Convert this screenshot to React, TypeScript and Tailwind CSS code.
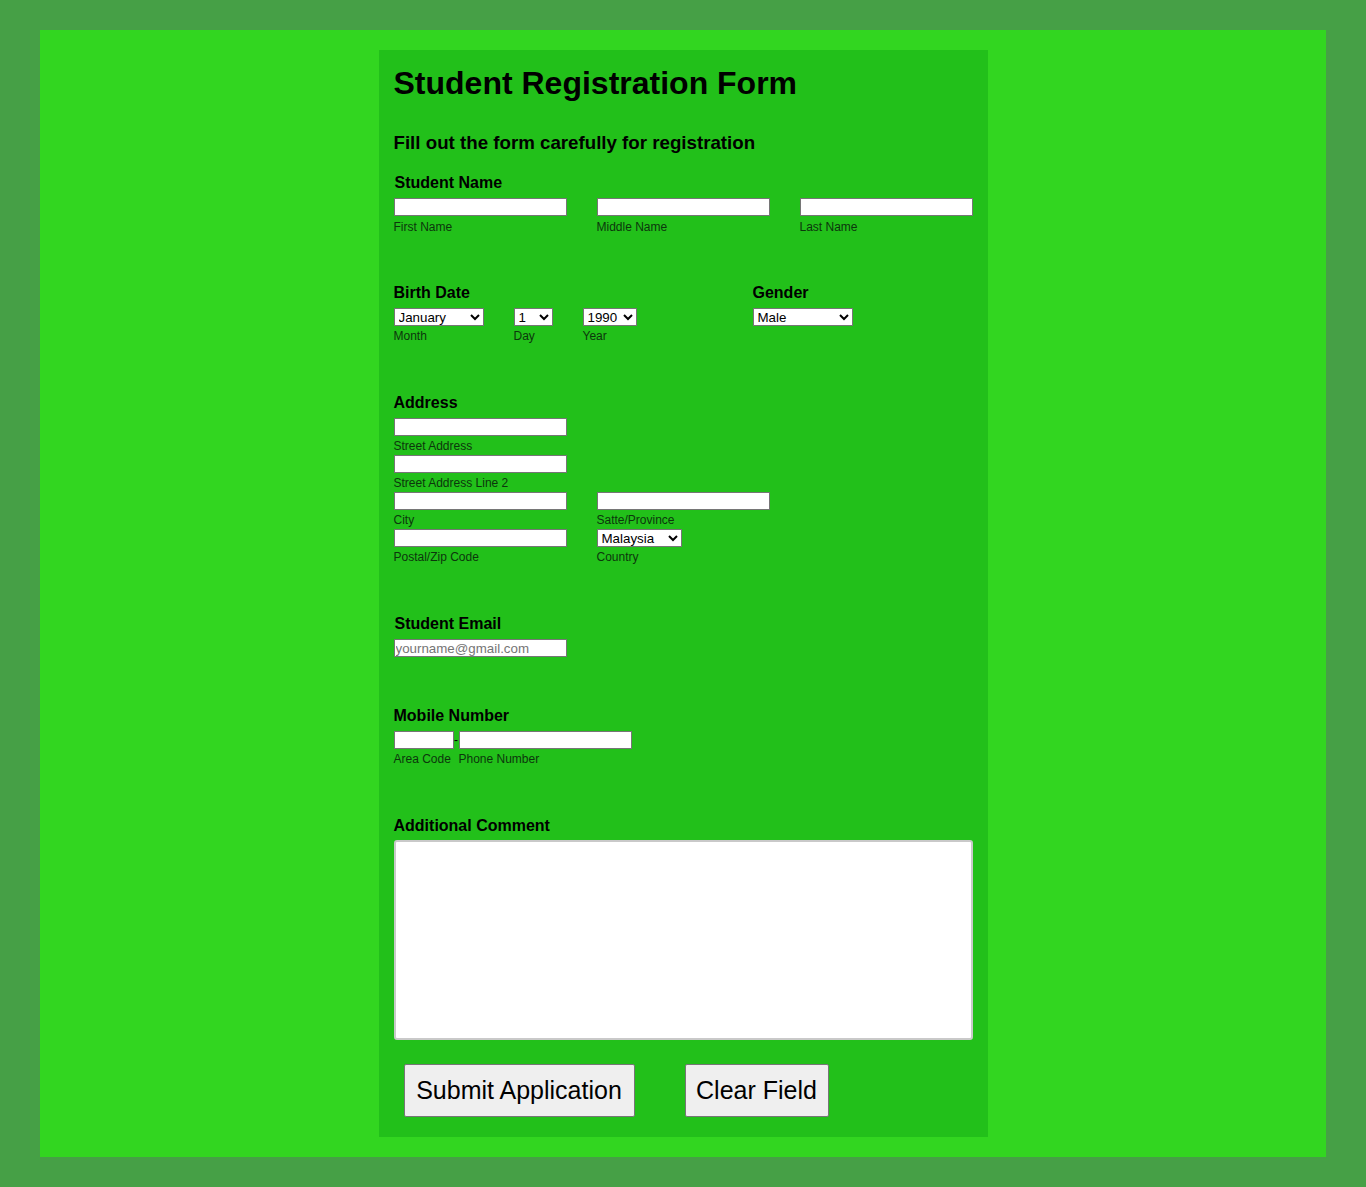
import type { ReactNode } from "react";

const inputCls =
  "block h-[18px] bg-white border border-[#767676] px-[1px] text-[13.33px] leading-[16px] text-black outline-none";
const selectCls =
  "block h-[18px] bg-white border border-[#767676] pl-0 text-[13.33px] leading-[16px] text-black outline-none";

function Heading({ children, className = "" }: { children: ReactNode; className?: string }) {
  return <div className={"text-[16px] leading-[18px] font-bold text-black " + className}>{children}</div>;
}

function Sub({ children, className = "" }: { children: ReactNode; className?: string }) {
  return <div className={"text-[12px] leading-[14px] text-[#0c360c] " + className}>{children}</div>;
}

function TextField({ label, className = "" }: { label: string; className?: string }) {
  return (
    <div className={className}>
      <input type="text" className={inputCls + " w-[173px]"} />
      <Sub className="mt-[3px]">{label}</Sub>
    </div>
  );
}

const months = ["January", "February", "March", "April", "May", "June", "July", "August", "September", "October", "November", "December"];

export default function App() {
  return (
    <div className="min-h-[1187px] bg-[#46a046] px-[40px] py-[30px] font-['Liberation_Sans',Arial,sans-serif]">
      <div className="bg-[#32d620] py-[20px]">
        <form className="mx-auto w-[609px] bg-[#22c01a] px-[15px] pt-[15px] pb-[20px]" onSubmit={(e) => e.preventDefault()}>
          <h1 className="text-[32px] leading-[37px] font-bold text-black">Student Registration Form</h1>
          <h3 className="mt-[30px] text-[18.72px] leading-[22px] font-bold text-black">
            Fill out the form carefully for registration
          </h3>

          {/* name */}
          <Heading className="mt-[20px] pl-[1px]">Student Name</Heading>
          <div className="mt-[6px] flex gap-[30px]">
            <div>
              <input type="text" className={inputCls + " w-[173px]"} />
              <Sub className="mt-[4px]">First Name</Sub>
            </div>
            <div>
              <input type="text" className={inputCls + " w-[173px]"} />
              <Sub className="mt-[4px]">Middle Name</Sub>
            </div>
            <div>
              <input type="text" className={inputCls + " w-[173px]"} />
              <Sub className="mt-[4px]">Last Name</Sub>
            </div>
          </div>

          {/* birth date + gender */}
          <div className="mt-[50px] flex">
            <div>
              <Heading>Birth Date</Heading>
              <div className="mt-[6px] flex gap-[30px]">
                <div>
                  <select className={selectCls + " w-[90px]"} defaultValue="January">
                    {months.map((m) => (
                      <option key={m}>{m}</option>
                    ))}
                  </select>
                  <Sub className="mt-[3px]">Month</Sub>
                </div>
                <div>
                  <select className={selectCls + " w-[39px]"} defaultValue="1">
                    {Array.from({ length: 31 }, (_, i) => (
                      <option key={i}>{i + 1}</option>
                    ))}
                  </select>
                  <Sub className="mt-[3px]">Day</Sub>
                </div>
                <div>
                  <select className={selectCls + " w-[54px]"} defaultValue="1990">
                    {Array.from({ length: 30 }, (_, i) => (
                      <option key={i}>{1980 + i}</option>
                    ))}
                  </select>
                  <Sub className="mt-[3px]">Year</Sub>
                </div>
              </div>
            </div>
            <div className="ml-[116px]">
              <Heading>Gender</Heading>
              <select className={selectCls + " mt-[6px] w-[100px]"} defaultValue="Male">
                <option>Male</option>
                <option>Female</option>
              </select>
            </div>
          </div>

          {/* address */}
          <Heading className="mt-[51px]">Address</Heading>
          <TextField label="Street Address" className="mt-[6px]" />
          <TextField label="Street Address Line 2" className="mt-[2px]" />
          <div className="mt-[2px] flex gap-[30px]">
            <TextField label="City" />
            <TextField label="Satte/Province" />
          </div>
          <div className="mt-[2px] flex gap-[30px]">
            <TextField label="Postal/Zip Code" />
            <div>
              <select className={selectCls + " w-[85px]"} defaultValue="Malaysia">
                <option>Malaysia</option>
                <option>Singapore</option>
                <option>Indonesia</option>
              </select>
              <Sub className="mt-[3px]">Country</Sub>
            </div>
          </div>

          {/* email */}
          <Heading className="mt-[51px] pl-[1px]">Student Email</Heading>
          <input
            type="email"
            placeholder="yourname@gmail.com"
            className={inputCls + " mt-[6px] w-[173px] placeholder:text-[#757575]"}
          />

          {/* mobile */}
          <Heading className="mt-[50px]">Mobile Number</Heading>
          <div className="mt-[6px] flex items-start">
            <div>
              <input type="text" className={inputCls + " w-[60px]"} />
              <Sub className="mt-[3px]">Area Code</Sub>
            </div>
            <span className="w-[5px] text-center text-[12px] leading-[18px] text-black">-</span>
            <div>
              <input type="text" className={inputCls + " w-[173px]"} />
              <Sub className="mt-[3px]">Phone Number</Sub>
            </div>
          </div>

          {/* comment */}
          <Heading className="mt-[51px]">Additional Comment</Heading>
          <textarea className="mt-[5px] block h-[200px] w-[579px] resize-none rounded-[3px] border-2 border-[#c9c9c9] bg-white outline-none" />

          <div className="mt-[24px] flex gap-[50px] pl-[10px]">
            <button
              type="submit"
              className="h-[53px] w-[231px] rounded-[2px] border border-[#767676] bg-[#efefef] text-[25px] text-black"
            >
              Submit Application
            </button>
            <button
              type="reset"
              className="h-[53px] w-[144px] rounded-[2px] border border-[#767676] bg-[#efefef] text-[25px] text-black"
            >
              Clear Field
            </button>
          </div>
        </form>
      </div>
    </div>
  );
}
